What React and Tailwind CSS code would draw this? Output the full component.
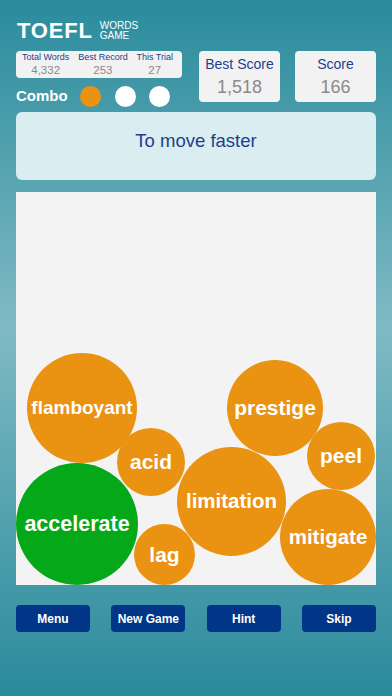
const words = [
  { w: 'flamboyant', left: 11, top: 161, size: 110, color: 'bg-[#ea9212]', font: 'text-[19px]' },
  { w: 'acid', left: 101, top: 236, size: 68, color: 'bg-[#ea9212]', font: 'text-[21px]' },
  { w: 'accelerate', left: 0, top: 271, size: 122, color: 'bg-[#04a819]', font: 'text-[21.5px]' },
  { w: 'lag', left: 118, top: 332, size: 61, color: 'bg-[#ea9212]', font: 'text-[21px]' },
  { w: 'prestige', left: 211, top: 168, size: 96, color: 'bg-[#ea9212]', font: 'text-[21px]' },
  { w: 'peel', left: 291, top: 230, size: 68, color: 'bg-[#ea9212]', font: 'text-[21px]' },
  { w: 'limitation', left: 161, top: 255, size: 109, color: 'bg-[#ea9212]', font: 'text-[20.5px]' },
  { w: 'mitigate', left: 264, top: 297, size: 96, color: 'bg-[#ea9212]', font: 'text-[20.5px]' },
];

const Stat = ({ label, value }) => (
  <div className="flex flex-col items-center leading-none">
    <span className="text-[9px] text-[#1d3f8f]">{label}</span>
    <span className="text-[11.5px] text-[#8a8a8a] mt-[3px]">{value}</span>
  </div>
);

const ScoreBox = ({ label, value }) => (
  <div className="w-[81px] h-[51px] rounded-[4px] bg-[#f2f2f2] flex flex-col items-center pt-[6px]">
    <span className="text-[14px] leading-none text-[#1d3f8f]">{label}</span>
    <span className="text-[18px] leading-none text-[#8a8a8a] mt-[7px]">{value}</span>
  </div>
);

export default function App() {
  return (
    <div
      className="w-[392px] h-[696px] overflow-hidden bg-[linear-gradient(to_bottom,#2a8b9c_0%,#7fbac4_47%,#2a8a9b_100%)] px-4 flex flex-col"
      style={{ fontFamily: '"Liberation Sans", Arial, sans-serif' }}
    >
      <div className="flex items-start justify-between pt-[17px]">
        <div className="flex flex-col">
          <div className="flex items-center gap-[7px] h-[28px] pl-[1px]">
            <span className="text-[22px] font-bold text-white leading-none tracking-[0.8px]">TOEFL</span>
            <div className="flex flex-col text-[10px] leading-[10px] text-white">
              <span>WORDS</span>
              <span>GAME</span>
            </div>
          </div>
          <div className="mt-[6px] w-[166px] h-[27px] rounded-[4px] bg-[#f2f2f2] flex items-center justify-between px-[6px]">
            <Stat label="Total Words" value="4,332" />
            <Stat label="Best Record" value="253" />
            <div className="pr-[3px]"><Stat label="This Trial" value="27" /></div>
          </div>
          <div className="flex items-center mt-[8px] h-[21px]">
            <span className="text-[15px] font-bold text-white">Combo</span>
            <span className="ml-[12px] w-[21px] h-[21px] rounded-full bg-[#ea9212]" />
            <span className="ml-[14px] w-[21px] h-[21px] rounded-full bg-white" />
            <span className="ml-[13px] w-[21px] h-[21px] rounded-full bg-white" />
          </div>
        </div>
        <div className="flex gap-[15px] mt-[34px]">
          <ScoreBox label="Best Score" value="1,518" />
          <ScoreBox label="Score" value="166" />
        </div>
      </div>

      <div className="mt-[5px] h-[68px] rounded-[6px] bg-[#daedf1] flex justify-center pt-[20px]">
        <span className="text-[18.5px] text-[#1d3f8f] leading-none">To move faster</span>
      </div>

      <div className="mt-[12px] h-[393px] bg-[#f3f3f3] relative overflow-hidden">
        {words.map(b => (
          <div
            key={b.w}
            className={`absolute rounded-full ${b.color} ${b.font} flex items-center justify-center text-white font-bold`}
            style={{ left: b.left, top: b.top, width: b.size, height: b.size }}
          >
            {b.w}
          </div>
        ))}
      </div>

      <div className="mt-[20px] flex justify-between">
        {['Menu', 'New Game', 'Hint', 'Skip'].map(t => (
          <button
            key={t}
            className="w-[74px] h-[27px] rounded-[4px] bg-[#003587] text-white text-[12px] font-bold flex items-center justify-center"
          >
            {t}
          </button>
        ))}
      </div>
    </div>
  );
}
